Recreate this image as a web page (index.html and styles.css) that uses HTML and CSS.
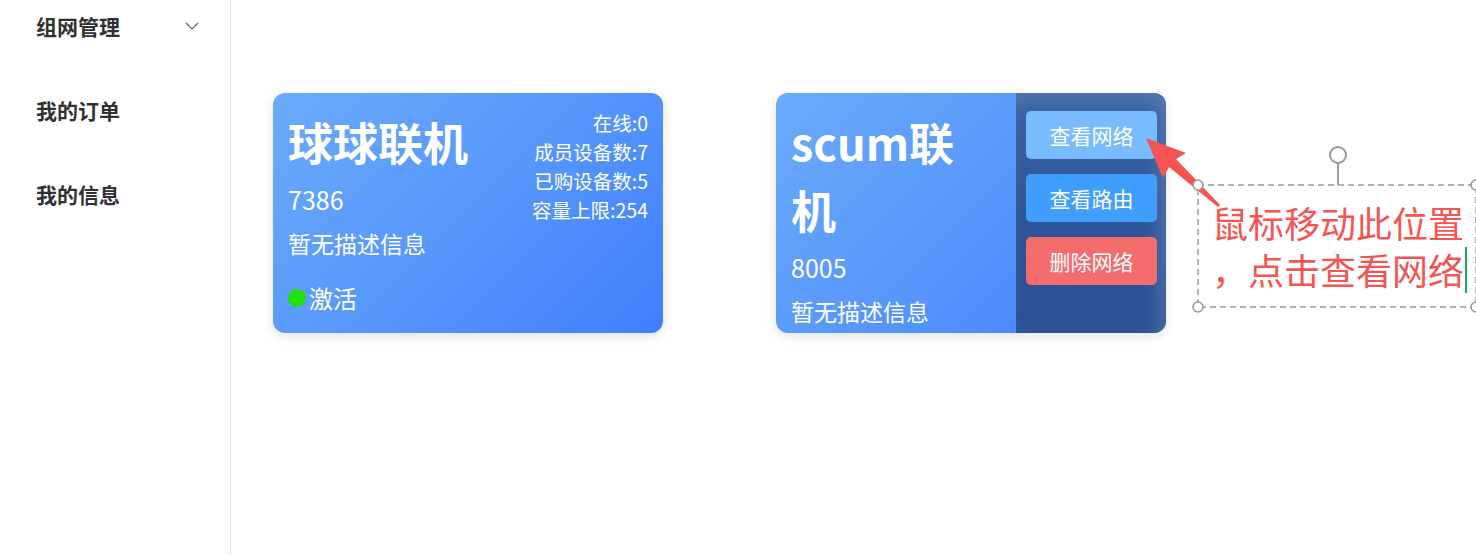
FILE: index.html
```html
<!DOCTYPE html>
<html lang="zh-CN">
<head>
    <meta charset="UTF-8" />
    <meta name="viewport" content="width=device-width, initial-scale=1" />
    <title>组网管理</title>
    <link rel="stylesheet" href="styles.css">
</head>
<body>
    <div class="layout">
        <aside class="sidebar">
            <ul class="menu">
                <li class="menu-item">
                    <span>组网管理</span>
                    <svg class="chevron" viewBox="0 0 14 8" aria-hidden="true">
                        <path d="M1 1 L7 7 L13 1" fill="none" stroke="#606266" stroke-width="1.2" />
                    </svg>
                </li>
                <li class="menu-item"><span>我的订单</span></li>
                <li class="menu-item"><span>我的信息</span></li>
            </ul>
        </aside>

        <main class="content">
            <div class="card-list">
                <div class="net-card">
                    <div class="card-info">
                        <div class="card-title">球球联机</div>
                        <div class="card-id">7386</div>
                        <div class="card-desc">暂无描述信息</div>
                        <div class="card-status"><span class="dot"></span>激活</div>
                    </div>
                    <div class="card-stats">
                        <div>在线:0</div>
                        <div>成员设备数:7</div>
                        <div>已购设备数:5</div>
                        <div>容量上限:254</div>
                    </div>
                </div>

                <div class="net-card">
                    <div class="card-info narrow">
                        <div class="card-title">scum联机</div>
                        <div class="card-id">8005</div>
                        <div class="card-desc">暂无描述信息</div>
                    </div>
                    <div class="card-actions">
                        <button class="btn btn-light">查看网络</button>
                        <button class="btn btn-primary">查看路由</button>
                        <button class="btn btn-danger">删除网络</button>
                    </div>
                </div>
            </div>
        </main>
    </div>

    <!-- annotation drawn over the screenshot -->
    <svg class="note-arrow" viewBox="0 0 100 90" aria-hidden="true">
        <polygon points="6,8 46,23 36,29 80,75 78,77 29,37 23,48" fill="#f65353" />
    </svg>
    <div class="note-box">
        <svg class="note-frame" viewBox="0 0 300 170" aria-hidden="true">
            <line x1="140" y1="10" x2="140" y2="40" stroke="#999" stroke-width="2" />
            <circle cx="140" cy="10" r="8" fill="#fff" stroke="#999" stroke-width="2" />
            <rect x="0" y="40" width="278" height="122" fill="none" stroke="#999" stroke-width="1.5" stroke-dasharray="6 4" />
            <circle cx="0" cy="40" r="5" fill="#fff" stroke="#999" stroke-width="1.5" />
            <circle cx="278" cy="40" r="5" fill="#fff" stroke="#999" stroke-width="1.5" />
            <circle cx="0" cy="162" r="5" fill="#fff" stroke="#999" stroke-width="1.5" />
            <circle cx="278" cy="162" r="5" fill="#fff" stroke="#999" stroke-width="1.5" />
        </svg>
        <div class="note-text">鼠标移动此位置<br>，点击查看网络<span class="caret"></span></div>
    </div>
</body>
</html>
```

FILE: styles.css
```css
/* Reset */
*, *::before, *::after {
    box-sizing: border-box;
}

body {
    margin: 0;
    font-family: "Noto Sans CJK SC", "Noto Sans", sans-serif;
    background: #fff;
    color: #303133;
    overflow: hidden;
}

.layout {
    display: flex;
    min-height: 100vh;
}

.sidebar {
    width: 231px;
    flex-shrink: 0;
    border-right: 1px solid #dcdfe6;
}

.menu {
    list-style: none;
    margin: -2px 0 0;
    padding: 0 0 0 36px;
    display: flex;
    flex-direction: column;
    gap: 28px;
}

.menu-item {
    height: 56px;
    display: flex;
    align-items: center;
    justify-content: space-between;
    padding-right: 31px;
    font-size: 21px;
    font-weight: 700;
    color: #303133;
}

.chevron {
    width: 14px;
    height: 8px;
}

.content {
    flex: 1;
    padding: 93px 0 0 42px;
}

.card-list {
    display: flex;
    gap: 113px;
}

.net-card {
    width: 390px;
    height: 240px;
    border-radius: 12px;
    overflow: hidden;
    display: flex;
    justify-content: space-between;
    color: #fff;
    background: linear-gradient(135deg, #6aabfb 0%, #5797fb 50%, #3f7ffd 100%);
    box-shadow: 0 3px 12px rgba(0, 0, 0, 0.12);
}

.card-info {
    padding: 15px 0 0 15px;
}

.card-info.narrow {
    width: 240px;
    padding-right: 20px;
}

.card-title {
    font-size: 45px;
    font-weight: 700;
    line-height: 68px;
}

.card-id {
    font-size: 25px;
    line-height: 47px;
}

.card-desc {
    font-size: 23px;
    line-height: 40px;
    white-space: nowrap;
}

.card-status {
    margin-top: 15px;
    display: flex;
    align-items: center;
    font-size: 24px;
    line-height: 40px;
}

.dot {
    width: 18px;
    height: 18px;
    border-radius: 50%;
    background: #1ee00a;
    margin-right: 3px;
}

.card-stats {
    padding: 15px 15px 0 0;
    text-align: right;
    font-size: 19.5px;
    line-height: 29px;
}

.card-actions {
    width: 150px;
    padding: 18px 9px 0 10px;
    display: flex;
    flex-direction: column;
    gap: 15px;
    background: linear-gradient(180deg, #3a62a3 0%, #2d5498 60%, #2a5096 100%);
    box-shadow: inset -8px 8px 18px rgba(140, 160, 200, 0.35);
}

.btn {
    height: 48px;
    border: none;
    border-radius: 5px;
    color: #fff;
    font-family: inherit;
    font-size: 21px;
    cursor: pointer;
}

.btn-light {
    background: #79bbff;
}

.btn-primary {
    background: #409eff;
}

.btn-danger {
    background: #f56c6c;
}

/* annotation overlay */
.note-arrow {
    position: absolute;
    left: 1140px;
    top: 130px;
    width: 100px;
    height: 90px;
}

.note-box {
    position: absolute;
    left: 1198px;
    top: 145px;
    width: 300px;
    height: 170px;
}

.note-frame {
    position: absolute;
    left: 0;
    top: 0;
    width: 300px;
    height: 170px;
    overflow: visible;
}

.note-text {
    position: absolute;
    left: 14px;
    top: 54px;
    white-space: nowrap;
    font-size: 36px;
    line-height: 47px;
    color: #f65353;
}

.caret {
    display: inline-block;
    width: 2px;
    height: 46px;
    background: #10b050;
    vertical-align: bottom;
    margin-left: 1px;
}
```
